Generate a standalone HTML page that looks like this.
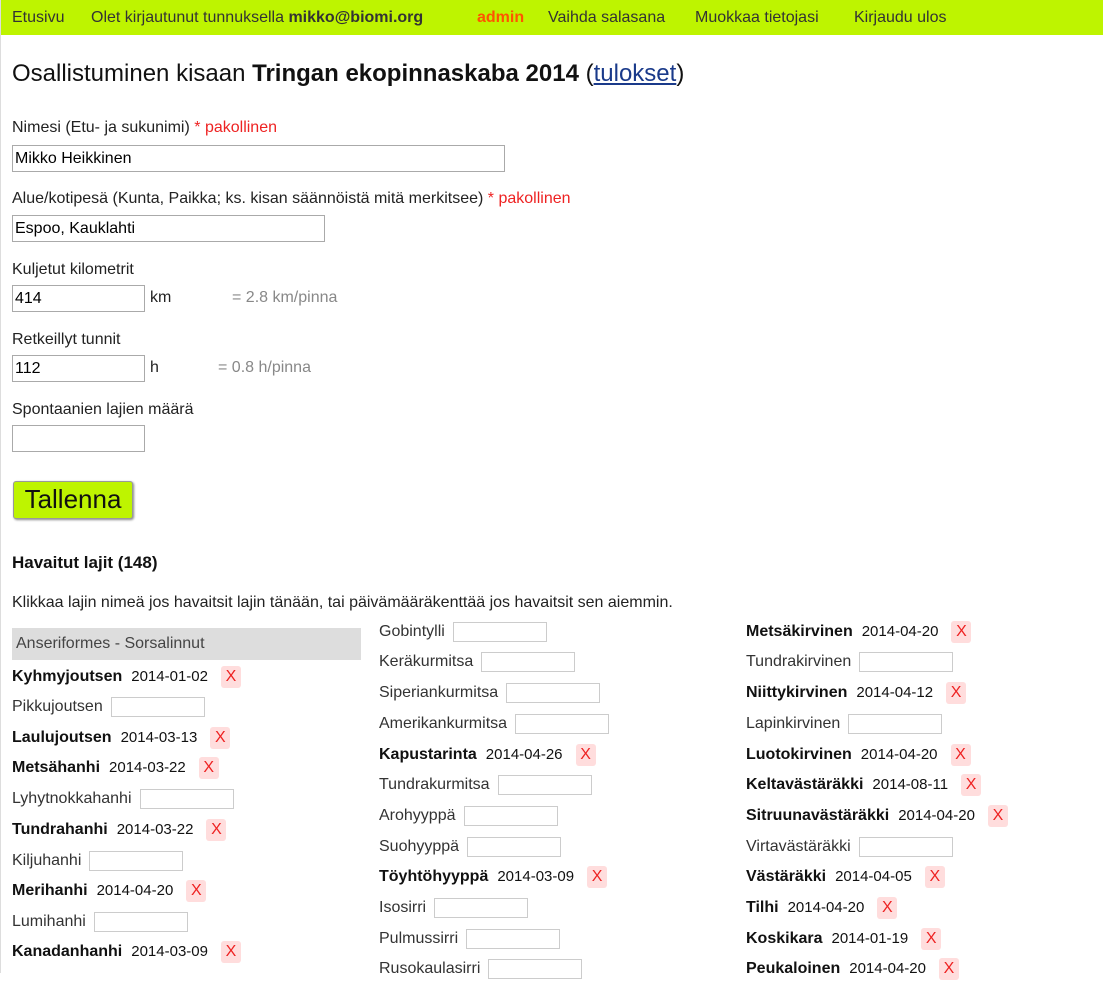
<!DOCTYPE html>
<html><head><meta charset="utf-8"><style>
body{margin:0;width:1103px;height:973px;overflow:hidden;background:#fff;font-family:"Liberation Sans",sans-serif;color:#222;position:relative;border-left:1px solid #ddd;box-sizing:border-box}
.nav{position:absolute;left:0;top:0;width:1103px;height:35px;background:#bef400;font-size:16px;line-height:35px;color:#333}
.nav span{position:absolute;top:0;white-space:nowrap}
.a{position:absolute;white-space:nowrap}
input.f{position:absolute;border:1px solid #aaa;height:25px;box-sizing:border-box;font:16px "Liberation Sans",sans-serif;padding:2px 2px;color:#000}
.req{color:#e22}
.grey{color:#888}
.r{position:absolute;height:24px;line-height:24px;font-size:16px;white-space:nowrap;display:flex;align-items:center;color:#333}
.r b{color:#111;margin-right:9px}
.r .d{color:#111;font-size:15px;margin-right:13px}
.r .x{display:inline-block;background:#fdd;color:#e22;width:20px;height:22px;line-height:22px;text-align:center;border-radius:3px;font-size:16px}
.r i{display:inline-block;width:94px;height:20px;border:1px solid #ccc;margin-left:8px;box-sizing:border-box}
</style></head><body>
<div class="nav">
<span style="left:11px">Etusivu</span>
<span style="left:90px">Olet kirjautunut tunnuksella <b>mikko@biomi.org</b></span>
<span style="left:476px;color:#f50;font-weight:bold">admin</span>
<span style="left:547px">Vaihda salasana</span>
<span style="left:694px">Muokkaa tietojasi</span>
<span style="left:853px">Kirjaudu ulos</span>
</div>
<div class="a" style="left:11px;top:60px;font-size:24px;color:#111">Osallistuminen kisaan <b>Tringan ekopinnaskaba 2014</b> (<u style="color:#1a3a8a">tulokset</u>)</div>

<div class="a" style="left:11px;top:119px;font-size:16px">Nimesi (Etu- ja sukunimi) <span class="req">* pakollinen</span></div>
<input class="f" style="left:11px;top:145px;width:493px;height:27px" value="Mikko Heikkinen">
<div class="a" style="left:11px;top:190px;font-size:16px">Alue/kotipesä (Kunta, Paikka; ks. kisan säännöistä mitä merkitsee) <span class="req">* pakollinen</span></div>
<input class="f" style="left:11px;top:215px;width:313px;height:27px" value="Espoo, Kauklahti">
<div class="a" style="left:11px;top:261px;font-size:16px">Kuljetut kilometrit</div>
<input class="f" style="left:11px;top:285px;width:133px;height:27px" value="414">
<div class="a" style="left:149px;top:289px;font-size:16px">km</div>
<div class="a grey" style="left:231px;top:289px;font-size:16px">= 2.8 km/pinna</div>
<div class="a" style="left:11px;top:331px;font-size:16px">Retkeillyt tunnit</div>
<input class="f" style="left:11px;top:355px;width:133px;height:27px" value="112">
<div class="a" style="left:149px;top:359px;font-size:16px">h</div>
<div class="a grey" style="left:217px;top:359px;font-size:16px">= 0.8 h/pinna</div>
<div class="a" style="left:11px;top:401px;font-size:16px">Spontaanien lajien määrä</div>
<input class="f" style="left:11px;top:425px;width:133px;height:27px">
<div class="a" style="left:12px;top:481px;width:118px;height:36px;background:#bef400;border:1px solid #999;border-radius:3px;box-shadow:1px 1px 2px #888;font-size:26px;line-height:34px;text-align:center;color:#111">Tallenna</div>
<div class="a" style="left:11px;top:553px;font-size:17px;font-weight:bold;color:#111">Havaitut lajit (148)</div>
<div class="a" style="left:11px;top:594px;font-size:16px">Klikkaa lajin nimeä jos havaitsit lajin tänään, tai päivämääräkenttää jos havaitsit sen aiemmin.</div>
<div class="a" style="left:11px;top:628px;width:349px;height:32px;background:#ddd;line-height:32px;font-size:16px;color:#444;padding-left:4px;box-sizing:border-box">Anseriformes - Sorsalinnut</div>

<div class="r" style="left:11px;top:665px"><b>Kyhmyjoutsen</b><span class="d">2014-01-02</span><span class="x">X</span></div>
<div class="r" style="left:11px;top:695px">Pikkujoutsen<i></i></div>
<div class="r" style="left:11px;top:726px"><b>Laulujoutsen</b><span class="d">2014-03-13</span><span class="x">X</span></div>
<div class="r" style="left:11px;top:756px"><b>Metsähanhi</b><span class="d">2014-03-22</span><span class="x">X</span></div>
<div class="r" style="left:11px;top:787px">Lyhytnokkahanhi<i></i></div>
<div class="r" style="left:11px;top:818px"><b>Tundrahanhi</b><span class="d">2014-03-22</span><span class="x">X</span></div>
<div class="r" style="left:11px;top:849px">Kiljuhanhi<i></i></div>
<div class="r" style="left:11px;top:879px"><b>Merihanhi</b><span class="d">2014-04-20</span><span class="x">X</span></div>
<div class="r" style="left:11px;top:910px">Lumihanhi<i></i></div>
<div class="r" style="left:11px;top:940px"><b>Kanadanhanhi</b><span class="d">2014-03-09</span><span class="x">X</span></div>

<div class="r" style="left:378px;top:620px">Gobintylli<i></i></div>
<div class="r" style="left:378px;top:650px">Keräkurmitsa<i></i></div>
<div class="r" style="left:378px;top:681px">Siperiankurmitsa<i></i></div>
<div class="r" style="left:378px;top:712px">Amerikankurmitsa<i></i></div>
<div class="r" style="left:378px;top:743px"><b>Kapustarinta</b><span class="d">2014-04-26</span><span class="x">X</span></div>
<div class="r" style="left:378px;top:773px">Tundrakurmitsa<i></i></div>
<div class="r" style="left:378px;top:804px">Arohyyppä<i></i></div>
<div class="r" style="left:378px;top:835px">Suohyyppä<i></i></div>
<div class="r" style="left:378px;top:865px"><b>Töyhtöhyyppä</b><span class="d">2014-03-09</span><span class="x">X</span></div>
<div class="r" style="left:378px;top:896px">Isosirri<i></i></div>
<div class="r" style="left:378px;top:927px">Pulmussirri<i></i></div>
<div class="r" style="left:378px;top:957px">Rusokaulasirri<i></i></div>

<div class="r" style="left:745px;top:620px"><b>Metsäkirvinen</b><span class="d">2014-04-20</span><span class="x">X</span></div>
<div class="r" style="left:745px;top:650px">Tundrakirvinen<i></i></div>
<div class="r" style="left:745px;top:681px"><b>Niittykirvinen</b><span class="d">2014-04-12</span><span class="x">X</span></div>
<div class="r" style="left:745px;top:712px">Lapinkirvinen<i></i></div>
<div class="r" style="left:745px;top:743px"><b>Luotokirvinen</b><span class="d">2014-04-20</span><span class="x">X</span></div>
<div class="r" style="left:745px;top:773px"><b>Keltavästäräkki</b><span class="d">2014-08-11</span><span class="x">X</span></div>
<div class="r" style="left:745px;top:804px"><b>Sitruunavästäräkki</b><span class="d">2014-04-20</span><span class="x">X</span></div>
<div class="r" style="left:745px;top:835px">Virtavästäräkki<i></i></div>
<div class="r" style="left:745px;top:865px"><b>Västäräkki</b><span class="d">2014-04-05</span><span class="x">X</span></div>
<div class="r" style="left:745px;top:896px"><b>Tilhi</b><span class="d">2014-04-20</span><span class="x">X</span></div>
<div class="r" style="left:745px;top:927px"><b>Koskikara</b><span class="d">2014-01-19</span><span class="x">X</span></div>
<div class="r" style="left:745px;top:957px"><b>Peukaloinen</b><span class="d">2014-04-20</span><span class="x">X</span></div>
</body></html>
